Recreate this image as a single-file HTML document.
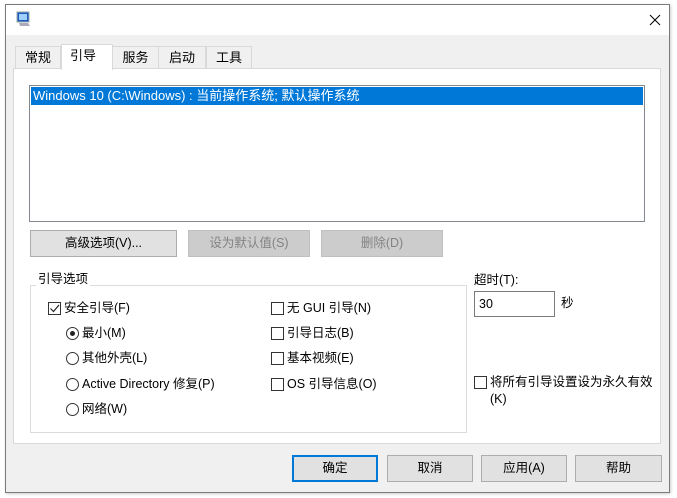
<!DOCTYPE html>
<html><head><meta charset="utf-8"><style>
*{box-sizing:border-box;margin:0;padding:0}
body{width:677px;height:498px;background:#fff;position:relative;overflow:hidden;font-family:"Liberation Sans","Microsoft YaHei","Noto Sans CJK SC",sans-serif;font-size:12.5px;color:#000}
.a{position:absolute}
.win{left:5px;top:4px;width:665px;height:489px;border:1px solid #7a7a7a;background:#f0f0f0;box-shadow:1px 1px 3px rgba(0,0,0,.2)}
.title{left:0;top:0;width:663px;height:30px;background:#fff}
.btn{position:absolute;background:#e1e1e1;border:1px solid #adadad;text-align:center;line-height:24px;font-size:12.5px}
.dis{background:#cccccc;border-color:#bfbfbf;color:#838383}
.cb{position:absolute;width:13px;height:13px;border:1px solid #333;background:#fff}
.rb{position:absolute;width:13px;height:13px;border:1px solid #333;border-radius:50%;background:#fff}
.t{position:absolute;white-space:nowrap;font-size:12.5px;line-height:14px}
.tab{position:absolute;border:1px solid #d9d9d9;border-bottom:none;background:#f0f0f0;text-align:center;line-height:22px;font-size:13px}
</style></head><body>
<div class="a win">
<div class="a title"></div>
<svg class="a" style="left:10px;top:6px" width="16" height="16" viewBox="0 0 16 16"><rect x="1" y="1" width="12" height="10" fill="#1e5bbf" stroke="#9aa" /><rect x="3" y="3" width="8" height="6" fill="#9fd0ff"/><path d="M3 12h9l2 3H4z" fill="#aab"/></svg>
<svg class="a" style="left:643px;top:9px" width="12" height="12"><path d="M1 1L11 11M11 1L1 11" stroke="#000" stroke-width="1"/></svg>
</div>
<div class="tab" style="left:15px;top:46px;width:46px;height:23px">常规</div>
<div class="tab" style="left:112px;top:46px;width:47px;height:23px">服务</div>
<div class="tab" style="left:158px;top:46px;width:48px;height:23px">启动</div>
<div class="tab" style="left:206px;top:46px;width:46px;height:23px">工具</div>
<div class="a" style="left:13px;top:68px;width:648px;height:376px;background:#fff;border:1px solid #d9d9d9"></div>
<div class="tab" style="left:61px;top:44px;width:52px;height:26px;background:#fff;line-height:22px;text-align:left;padding-left:8px">引导</div>
<div class="a" style="left:29px;top:85px;width:616px;height:137px;border:1px solid #828790;background:#fff"></div>
<div class="a" style="left:31px;top:87px;width:612px;height:18px;background:#0078d7;color:#fff;line-height:18px;padding-left:2px;font-size:13px;white-space:nowrap">Windows 10 (C:\Windows) : 当前操作系统; 默认操作系统</div>
<div class="btn" style="left:30px;top:230px;width:147px;height:27px">高级选项(V)...</div>
<div class="btn dis" style="left:188px;top:230px;width:122px;height:27px">设为默认值(S)</div>
<div class="btn dis" style="left:321px;top:230px;width:122px;height:27px">删除(D)</div>
<div class="a" style="left:30px;top:285px;width:437px;height:148px;border:1px solid #dcdcdc"></div>
<div class="t" style="left:36px;top:272px;background:#fff;padding:0 2px">引导选项</div>
<div class="cb" style="left:48px;top:302px"></div>
<svg class="a" style="left:49px;top:303px" width="11" height="11"><path d="M1.5 5.5L4.5 8.5L10 2" stroke="#222" fill="none" stroke-width="1.2"/></svg>
<div class="t" style="left:64px;top:301px">安全引导(F)</div>
<div class="rb" style="left:66px;top:327px"></div><div class="a" style="left:70px;top:331px;width:5px;height:5px;border-radius:50%;background:#222"></div>
<div class="t" style="left:82px;top:326px">最小(M)</div>
<div class="rb" style="left:66px;top:352px"></div><div class="t" style="left:82px;top:351px">其他外壳(L)</div>
<div class="rb" style="left:66px;top:378px"></div><div class="t" style="left:82px;top:377px">Active Directory 修复(P)</div>
<div class="rb" style="left:66px;top:403px"></div><div class="t" style="left:82px;top:402px">网络(W)</div>
<div class="cb" style="left:271px;top:302px"></div><div class="t" style="left:287px;top:301px">无 GUI 引导(N)</div>
<div class="cb" style="left:271px;top:327px"></div><div class="t" style="left:287px;top:326px">引导日志(B)</div>
<div class="cb" style="left:271px;top:352px"></div><div class="t" style="left:287px;top:351px">基本视频(E)</div>
<div class="cb" style="left:271px;top:378px"></div><div class="t" style="left:287px;top:377px">OS 引导信息(O)</div>
<div class="t" style="left:474px;top:273px">超时(T):</div>
<div class="a" style="left:474px;top:291px;width:81px;height:26px;border:1px solid #7a7a7a;background:#fff;padding:5px 4px;line-height:14px">30</div>
<div class="t" style="left:561px;top:296px">秒</div>
<div class="cb" style="left:474px;top:376px"></div>
<div class="t" style="left:490px;top:374px;line-height:17px">将所有引导设置设为永久有效<br>(K)</div>
<div class="btn" style="left:292px;top:455px;width:86px;height:27px;border:2px solid #0078d7;line-height:23px">确定</div>
<div class="btn" style="left:387px;top:455px;width:86px;height:27px">取消</div>
<div class="btn" style="left:481px;top:455px;width:86px;height:27px">应用(A)</div>
<div class="btn" style="left:575px;top:455px;width:87px;height:27px">帮助</div>
</body></html>
